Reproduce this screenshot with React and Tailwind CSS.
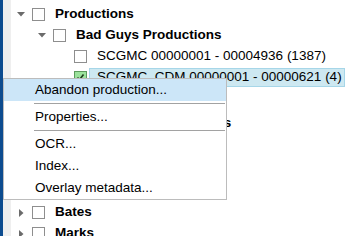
import React from "react";

const font = { fontFamily: '"Liberation Sans", Arial, sans-serif' };

function TriDown() {
  return (
    <svg width="8" height="5" viewBox="0 0 8 5" className="block">
      <polygon points="0,0 8,0 4,4.5" fill="#6b6b6b" />
    </svg>
  );
}
function TriRight() {
  return (
    <svg width="8" height="8" viewBox="0 0 8 8" className="block">
      <polygon points="2,0 6.5,4 2,8" fill="#6b6b6b" />
    </svg>
  );
}

function Box({ checked }) {
  return (
    <div
      className={
        "w-[13px] h-[13px] shrink-0 border flex items-center justify-center " +
        (checked ? "border-[#5c9a5c] bg-[#9be29b]" : "border-[#8e8e8e] bg-white")
      }
    >
      {checked && (
        <svg width="9" height="9" viewBox="0 0 9 9">
          <path d="M1.5 4.5 L3.5 6.8 L7.5 1.5" stroke="#1d3d1d" strokeWidth="1.6" fill="none" />
        </svg>
      )}
    </div>
  );
}

function Row({ level, tri, bold, checked, selected, children }) {
  const pads = ["pl-[17px]", "pl-[38px]", "pl-[59px]"];
  return (
    <div className={"h-[21px] shrink-0 flex items-center " + pads[level]}>
      <div className="w-[8px] shrink-0 flex items-center justify-center">
        {tri === "down" && <TriDown />}
        {tri === "right" && <TriRight />}
      </div>
      <div className="ml-[7px]">
        <Box checked={checked} />
      </div>
      {selected ? (
        <div className="ml-[2px] h-[19px] w-[256px] flex items-center pl-[7px] bg-[#cde8f1] border border-[#a6d6e8] whitespace-nowrap text-black">
          {children}
        </div>
      ) : (
        <div className={"ml-[10px] whitespace-nowrap text-black " + (bold ? "font-bold" : "")}>
          {children}
        </div>
      )}
    </div>
  );
}

export default function App() {
  return (
    <div
      className="relative w-[364px] h-[236px] overflow-hidden bg-white flex text-[13.5px]"
      style={font}
    >
      <div className="w-[3px] shrink-0 bg-[#0d4c8f]" />
      <div className="w-[8px] shrink-0 bg-[#efefef]" />
      <div className="flex-1 -ml-[11px] pt-[4px] flex flex-col">
        <Row level={0} tri="down" bold>Productions</Row>
        <Row level={1} tri="down" bold>Bad Guys Productions</Row>
        <Row level={2}>SCGMC 00000001 - 00004936 (1387)</Row>
        <Row level={2} checked selected>SCGMC_CDM 00000001 - 00000621 (4)</Row>
        <div className="h-[4px] shrink-0" />
        <Row level={0} tri="right" />
        <Row level={1} tri="right" bold>Good Guys Productions</Row>
        <Row level={0} tri="right" />
        <Row level={0} tri="right" />
        <Row level={0} tri="right" />
        <div className="h-[5px] shrink-0" />
        <Row level={0} tri="right" bold>Bates</Row>
        <Row level={0} tri="right" bold>Marks</Row>
      </div>

      <div className="absolute left-[3px] top-[78px] w-[224px] h-[122px] bg-white border border-[#bcbcbc] flex flex-col text-black">
        <div className="h-[22px] shrink-0 flex items-center pl-[31px] bg-[#cce6f8]">Abandon production...</div>
        <div className="h-[5px] shrink-0 pt-[2px] pl-[30px] pr-[1px]">
          <div className="h-px bg-[#a2a2a2]" />
        </div>
        <div className="h-[22px] shrink-0 flex items-center pl-[31px]">Properties...</div>
        <div className="h-[5px] shrink-0 pt-[2px] pl-[30px] pr-[1px]">
          <div className="h-px bg-[#a2a2a2]" />
        </div>
        <div className="h-[22px] shrink-0 flex items-center pl-[31px]">OCR...</div>
        <div className="h-[22px] shrink-0 flex items-center pl-[31px]">Index...</div>
        <div className="h-[22px] shrink-0 flex items-center pl-[31px]">Overlay metadata...</div>
      </div>
    </div>
  );
}
